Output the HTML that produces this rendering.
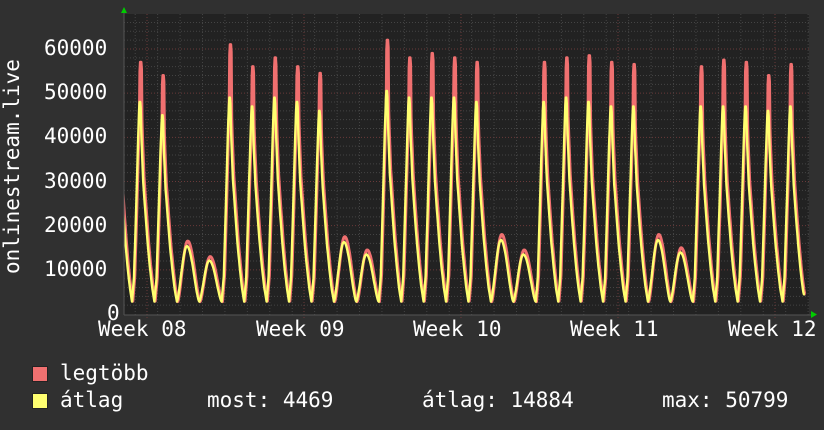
<!DOCTYPE html>
<html><head><meta charset="utf-8"><style>
body{margin:0;background:#303030;width:824px;height:430px;overflow:hidden;position:relative;font-family:"DejaVu Sans Mono","Liberation Mono",monospace;color:#fff;font-size:21px}
.t{position:absolute;white-space:pre;line-height:1}
</style></head><body>
<svg id="g" width="824" height="430" style="position:absolute;left:0;top:0">
<rect x="124" y="14" width="685" height="301" fill="#222"/>
<g id="grid"></g>
<clipPath id="c"><rect x="124" y="14" width="685" height="301"/></clipPath>
<g clip-path="url(#c)"><polyline id="mx" fill="none" stroke="#f07070" stroke-width="3" stroke-linejoin="round" transform="translate(0.8,0)"/>
<polyline id="av" fill="none" stroke="#ffff70" stroke-width="2.4" stroke-linejoin="round"/></g>
<line x1="124" y1="315" x2="812" y2="315" stroke="#555"/>
<line x1="124" y1="10" x2="124" y2="315" stroke="#555"/>
<polygon points="121,13 127,13 124,7" fill="#0c0"/>
<polygon points="811,311 811,318 817,314.5" fill="#0c0"/>
</svg>
<div class="t" style="left:44px;top:38px">60000</div>
<div class="t" style="left:44px;top:82px">50000</div>
<div class="t" style="left:44px;top:126px">40000</div>
<div class="t" style="left:44px;top:171px">30000</div>
<div class="t" style="left:44px;top:215px">20000</div>
<div class="t" style="left:44px;top:259px">10000</div>
<div class="t" style="left:107px;top:303px">0</div>
<div class="t" style="left:98px;top:319px">Week 08</div>
<div class="t" style="left:256px;top:319px">Week 09</div>
<div class="t" style="left:413px;top:319px">Week 10</div>
<div class="t" style="left:570px;top:319px">Week 11</div>
<div class="t" style="left:728px;top:319px">Week 12</div>
<div class="t" style="left:2px;top:274px;transform:rotate(-90deg);transform-origin:0 0">onlinestream.live</div>
<div style="position:absolute;left:32px;top:366px;width:14px;height:14px;background:#f07070;border:1px solid #222"></div>
<div style="position:absolute;left:32px;top:393px;width:14px;height:14px;background:#ffff70;border:1px solid #222"></div>
<div class="t" style="left:60px;top:363px">legtöbb</div>
<div class="t" style="left:60px;top:390px">átlag</div>
<div class="t" style="left:207px;top:390px">most: 4469</div>
<div class="t" style="left:422px;top:390px">átlag: 14884</div>
<div class="t" style="left:662px;top:390px">max: 50799</div>
<script>
var NS="http://www.w3.org/2000/svg",G=document.getElementById('grid');
function ln(x1,y1,x2,y2,c){var l=document.createElementNS(NS,'line');l.setAttribute('x1',x1);l.setAttribute('y1',y1);l.setAttribute('x2',x2);l.setAttribute('y2',y2);l.setAttribute('stroke',c);l.setAttribute('stroke-dasharray','1,2');G.appendChild(l);}
function Y(v){return 314-v*0.004417;}
for(var v=2000;v<=66000;v+=2000){var y=Y(v);if(y<14)break;ln(124,y,809,y,v%10000?'#444':'#6a3a3a');}
for(var x=124+11.2;x<809;x+=22.43){ln(x,14,x,315,'#444');}
[147,304,461,618,775].forEach(function(x){ln(x,14,x,318,'#6a3a3a');});
var pk=[[60000,50000],[57000,48000],[54000,45000],[16500,-1],[13000,-1],[61000,49000],[56000,47000],[58000,49000],[56000,48000],[54500,46000],[17500,-1],[14500,-1],[62000,50500],[58000,49000],[59000,49000],[58000,49000],[57000,48000],[18000,-1],[14500,-1],[57000,48000],[58000,49000],[58500,48000],[57000,47000],[56500,47000],[18000,-1],[15000,-1],[56000,47000],[57500,47000],[57000,47000],[54000,46000],[56500,47000]];
var M=[],A=[];
var F=[[0,0],[0.09,0.12],[0.18,0.45],[0.27,0.8],[0.33,1],[0.38,1],[0.42,0.82],[0.5,0.6],[0.6,0.44],[0.7,0.29],[0.8,0.17],[0.9,0.07],[1,0]];
function shape(p){for(var i=1;i<F.length;i++)if(p<=F[i][0]){var a=F[i-1],b=F[i];return a[1]+(b[1]-a[1])*(p-a[0])/(b[0]-a[0]);}return 0;}
function wk(p,pe){var q=p<0.45?p/0.45*0.5:0.5+(p-0.45)/0.55*0.5;return 2800+(pe-2800)*Math.pow(Math.sin(Math.PI*q),1.5);}
for(var d=0;d<pk.length;d++){var x0=132+22.43*(d-1);
 for(var s=0;s<=44;s++){var p=s/44,x=x0+p*22.43,m,a;
  if(pk[d][1]<0){m=wk(p,pk[d][0]);a=wk(p,pk[d][0]*0.93);}
  else{var sh=shape(p);a=2800+(pk[d][1]-2800)*sh;
   var mp=(p>0.3&&p<0.4)?pk[d][0]:pk[d][1]*1.04;m=2900+(mp-2900)*sh;}
  if(d==pk.length-1&&p>0.8){a=Math.max(a,4469);m=Math.max(m,4600);}
  M.push(x.toFixed(1)+','+Y(m).toFixed(1));A.push(x.toFixed(1)+','+Y(a).toFixed(1));}}
document.getElementById('mx').setAttribute('points',M.join(' '));
document.getElementById('av').setAttribute('points',A.join(' '));
</script>
</body></html>
